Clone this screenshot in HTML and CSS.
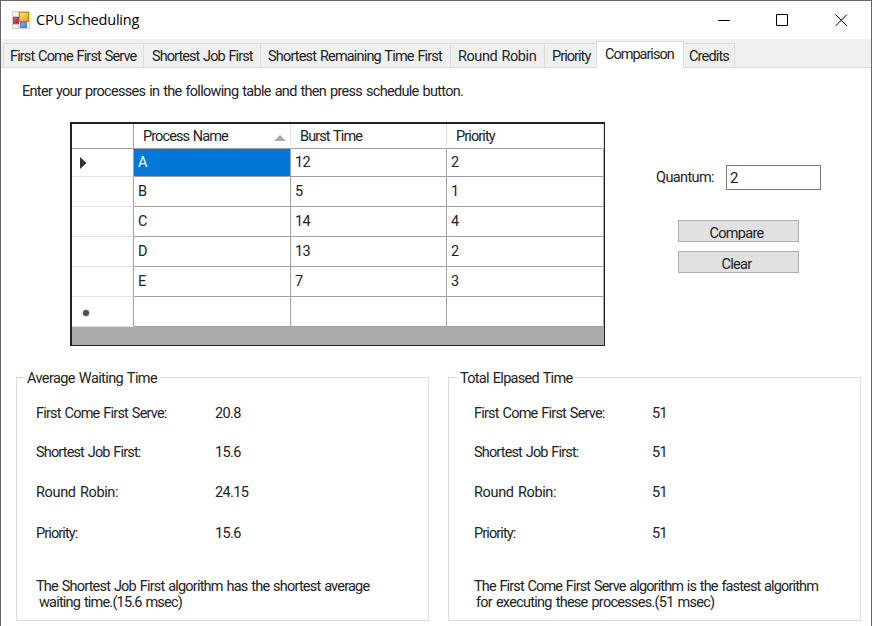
FILE: index.html
```html
<!DOCTYPE html>
<html lang="en">
<head>
<meta charset="utf-8">
<title>CPU Scheduling</title>
<link rel="stylesheet" href="styles.css">
</head>
<body>
<div class="window">
  <header class="titlebar">
    <svg class="app-icon" width="18" height="18" viewBox="0 0 18 18">
      <defs>
        <linearGradient id="gold" x1="0" y1="0" x2="1" y2="1"><stop offset="0" stop-color="#ffe680"/><stop offset="1" stop-color="#dea000"/></linearGradient>
        <linearGradient id="red" x1="0" y1="0" x2="1" y2="1"><stop offset="0" stop-color="#e06a62"/><stop offset="1" stop-color="#a81a1a"/></linearGradient>
        <linearGradient id="blue" x1="0" y1="0" x2="1" y2="1"><stop offset="0" stop-color="#8fc0ff"/><stop offset="1" stop-color="#3c78d8"/></linearGradient>
      </defs>
      <rect x=".5" y=".5" width="17" height="17" fill="#f1f1f3" stroke="#cfcfd3"/>
      <path d="M1 5.500H7M6.500 1V17M1 13.500H7" stroke="#c9c9cf" fill="none"/>
      <rect x="7.500" y="1.500" width="9" height="9" fill="url(#gold)" stroke="#c08d1c"/>
      <rect x="1.500" y="6.500" width="5" height="6" fill="url(#red)" stroke="#b04a48"/>
      <rect x="8.500" y="11.500" width="6" height="5" fill="url(#blue)" stroke="#5580c8"/>
    </svg>
    <span class="title">CPU Scheduling</span>
    <div class="controls">
      <svg width="13" height="13" viewBox="0 0 13 13"><path d="M0 6.500H12" /></svg>
      <svg width="13" height="13" viewBox="0 0 13 13"><path d="M.5 .5H11.500V11.500H.5Z"/></svg>
      <svg width="13" height="13" viewBox="0 0 13 13"><path d="M.5 .5L12 12M12 .5L.5 12"/></svg>
    </div>
  </header>
  <nav class="tabs">
    <div class="tab t-fcfs"><span>First Come First Serve</span></div>
    <div class="tab t-sjf"><span>Shortest Job First</span></div>
    <div class="tab t-srtf"><span>Shortest Remaining Time First</span></div>
    <div class="tab t-rr"><span>Round Robin</span></div>
    <div class="tab t-prio"><span>Priority</span></div>
    <div class="tab t-comp active"><span>Comparison</span></div>
    <div class="tab t-cred"><span>Credits</span></div>
  </nav>
  <main class="page">
    <p class="intro">Enter your processes in the following table and then press schedule button.</p>
    <div class="top">
      <div class="grid">
        <div class="row head"><i></i><b><span>Process Name</span><svg width="12" height="6" viewBox="0 0 12 6"><path d="M0 6L6 0L12 6Z"/></svg></b><b>Burst Time</b><b>Priority</b></div>
        <div class="row first"><i><svg width="7" height="12" viewBox="0 0 7 12"><path d="M0 0L6.500 6L0 12Z"/></svg></i><b class="selected">A</b><b>12</b><b>2</b></div>
        <div class="row"><i></i><b>B</b><b>5</b><b>1</b></div>
        <div class="row"><i></i><b>C</b><b>14</b><b>4</b></div>
        <div class="row"><i></i><b>D</b><b>13</b><b>2</b></div>
        <div class="row"><i></i><b>E</b><b>7</b><b>3</b></div>
        <div class="row new"><i><svg width="8" height="8" viewBox="0 0 8 8"><circle cx="4" cy="4" r="2.800"/><path d="M4 .5V7.500M.5 4H7.500M1.500 1.500L6.500 6.500M6.500 1.500L1.500 6.500"/></svg></i><b></b><b></b><b></b></div>
      </div>
      <div class="side">
        <label class="quantum"><span>Quantum:</span><input type="text" value="2"></label>
        <button type="button"><span class="clip">Compare</span></button>
        <button type="button"><span class="caption">Clear</span></button>
      </div>
    </div>
    <div class="groups">
      <fieldset>
        <legend>Average Waiting Time</legend>
        <dl>
          <dt class="l-fcfs">First Come First Serve:</dt><dd>20.8</dd>
          <dt class="l-sjf">Shortest Job First:</dt><dd>15.6</dd>
          <dt class="l-rr">Round Robin:</dt><dd>24.15</dd>
          <dt class="l-prio">Priority:</dt><dd>15.6</dd>
        </dl>
        <p class="note"><span>The Shortest Job First algorithm has the shortest average</span><br><span class="second">waiting time.(15.6 msec)</span></p>
      </fieldset>
      <fieldset class="elapsed">
        <legend>Total Elpased Time</legend>
        <dl>
          <dt class="l-fcfs">First Come First Serve:</dt><dd>51</dd>
          <dt class="l-sjf">Shortest Job First:</dt><dd>51</dd>
          <dt class="l-rr">Round Robin:</dt><dd>51</dd>
          <dt class="l-prio">Priority:</dt><dd>51</dd>
        </dl>
        <p class="note"><span>The First Come First Serve algorithm is the fastest algorithm</span><br><span class="second">for executing these processes.(51 msec)</span></p>
      </fieldset>
    </div>
  </main>
</div>
</body>
</html>
```
FILE: styles.css
```css
* { box-sizing: border-box; }
body {
  margin: 0;
  background: #fff;
  color: #222;
  font: 14.5px/16px Roboto, "Liberation Sans", sans-serif;
  letter-spacing: -0.6px;
  word-spacing: 1px;
  overflow: hidden;
}
.window {
  width: 872px;
  height: 626px;
  border: 1px solid #666;
  border-bottom: 0;
  overflow: hidden;
}
.titlebar {
  height: 38px;
  display: flex;
  align-items: center;
  padding-left: 11px;
}
.title {
  margin-left: 6px;
  font: 14.5px/20px "Open Sans", "Noto Sans", sans-serif;
  letter-spacing: -0.2px;
  word-spacing: 0;
  color: #000;
}
.controls { margin-left: auto; display: flex; gap: 45px; margin-right: 24px; }
.controls svg { fill: none; stroke: #000; stroke-width: 1; display: block; }
.controls svg:last-child { margin: 0 -1px 0 1px; }
.tabs {
  height: 29px;
  background: #f0f0f0;
  display: flex;
  align-items: flex-end;
  padding-left: 2px;
  border-bottom: 1px solid #dedede;
}
.tab {
  height: 24px;
  border: 1px solid #dcdcdc;
  border-width: 1px 1px 0 0;
  padding-top: 5px;
  padding-left: 7px;
  white-space: nowrap;
  letter-spacing: -0.83px;
}
.t-fcfs { width: 141px; border-left-width: 1px; padding-left: 6px; letter-spacing: -0.86px; }
.t-sjf { width: 117px; padding-left: 8px; letter-spacing: -0.92px; }
.t-srtf { width: 190px; }
.t-rr { width: 94px; letter-spacing: -0.42px; }
.t-prio { width: 51px; border-right: 0; letter-spacing: -0.95px; }
.t-comp { width: 88px; letter-spacing: -1px; }
.t-cred { width: 51px; padding-left: 5px; }
.tab.active { height: 27px; margin-bottom: -1px; background: #fff; border-left-width: 1px; padding: 5px 0 0 8px; }
.page { height: 558px; }
.intro { margin: 0; padding: 16px 0 0 21px; height: 54px; letter-spacing: -0.7px; }
.top { display: flex; height: 224px; padding-left: 69px; }
.grid {
  width: 535px;
  height: 224px;
  border: 2px solid #222;
  border-width: 2px 1px 1px 2px;
  background: #ababab;
}
.row {
  height: 30px;
  display: grid;
  grid-template-columns: 62px 157px 156px 1fr;
  background: #fff;
}
.row i { border-right: 1px solid #a0a0a0; border-bottom: 1px solid #e4e4e4; padding: 11px 0 0 8px; }
.row i svg { display: block; fill: #333; stroke: none; }
.row b {
  font-weight: 400;
  border-right: 1px solid #a0a0a0;
  border-bottom: 1px solid #a0a0a0;
  padding: 7px 0 0 4px;
}
.row.head { height: 25px; }
.row.head i { border-bottom-color: #a0a0a0; }
.row.head b { border-right-color: #e4e4e4; padding: 5px 4px 0 9px; letter-spacing: -0.9px; display: flex; justify-content: space-between; }
.row.head svg { fill: #a8a8a8; margin-top: 6px; }
.row.first { height: 28px; }
.row.first b { padding-top: 6px; }
.row.first i { padding-top: 8px; }
.row .selected { background: #0078d7; color: #fff; }
.row.new i svg { margin-top: 1px; margin-left: 2px; stroke: #555; stroke-width: 0.8; fill: #444; }
.side { width: 200px; padding: 43px 0 0 51px; display: flex; flex-direction: column; align-items: flex-start; }
.quantum { display: flex; align-items: center; margin-bottom: 30px; }
.quantum span { width: 70px; padding-top: 1px; }
.quantum input {
  width: 95px;
  height: 25px;
  border: 1px solid #7a7a7a;
  padding: 0 3px;
  font: inherit;
  font-size: 15px;
  color: #222;
  background: #fff;
}
.side button {
  width: 121px;
  height: 22px;
  margin: 0 0 9px 22px;
  padding: 0;
  border: 1px solid #adadad;
  background: #e1e1e1;
  font: inherit;
  letter-spacing: -0.7px;
  color: #222;
}
.clip, .caption { display: block; height: 16px; margin: 2px 4px 0 0; line-height: 19px; }
.clip { overflow: hidden; }
.groups { display: flex; gap: 19px; padding: 24px 0 0 15px; }
fieldset {
  width: 413px;
  height: 252px;
  margin: 0;
  padding: 20px 0 0 19px;
  border: 1px solid #dcdcdc;
  min-width: 0;
  margin-top: -1px;
}
legend { padding: 2px 3px 0 2px; margin-left: -11px; height: 17px; letter-spacing: -0.6px; white-space: nowrap; }
dl { margin: 0; display: grid; grid-template-columns: 179px 1fr; grid-template-rows: 39px 40px 41px 53px; }
dt, dd { margin: 0; }
.l-fcfs { letter-spacing: -0.79px; }
.l-sjf { letter-spacing: -0.85px; }
.l-rr { letter-spacing: -0.35px; }
.l-prio { letter-spacing: -0.9px; }
.note { margin: 0; white-space: nowrap; letter-spacing: -0.8px; }
.second { margin-left: 3px; }
.elapsed { padding-left: 25px; }
.elapsed dl { grid-template-columns: 178px 1fr; }
.elapsed legend { margin-left: -16px; letter-spacing: -0.7px; }
.elapsed .note { letter-spacing: -0.87px; }
.elapsed .second { margin-left: 2px; letter-spacing: -0.73px; }
```
